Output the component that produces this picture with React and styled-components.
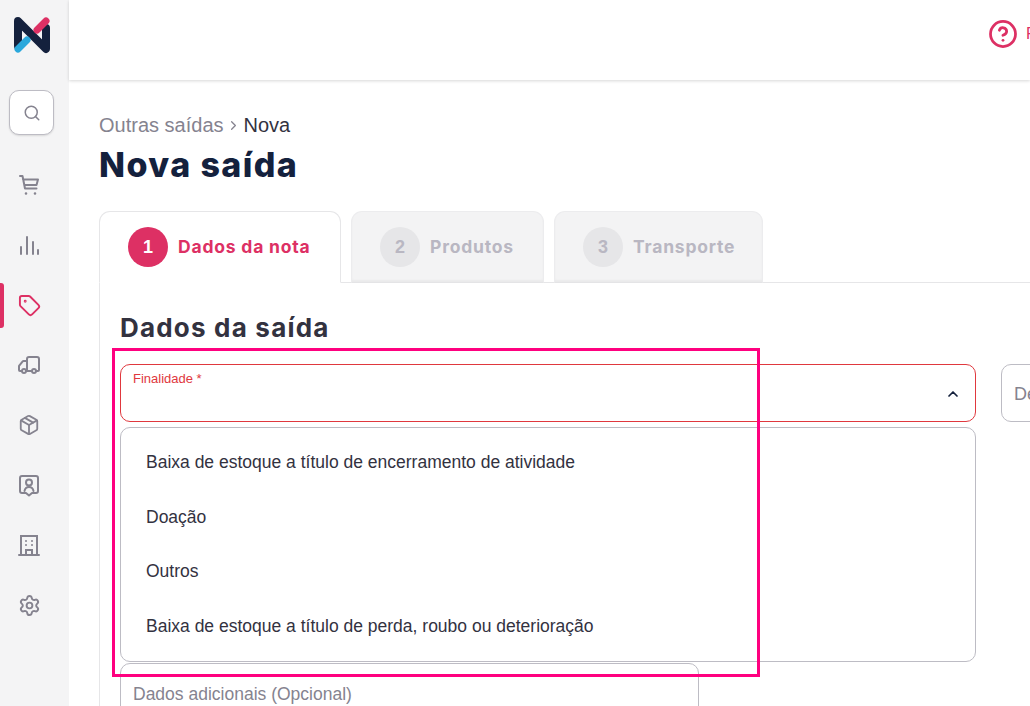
import React from "react";
import styled, { createGlobalStyle } from "styled-components";
import { Search, Tag, Truck, Package, Settings, ChevronUp, CircleHelp, ChevronRight } from "lucide-react";

const GlobalStyle = createGlobalStyle`
  html, body { margin: 0; padding: 0; background: #fff; }
  body { font-family: "Liberation Sans", Arial, sans-serif; }
  * { box-sizing: border-box; }
`;

const Page = styled.div`
  display: flex;
  width: 1030px;
  height: 706px;
  overflow: hidden;
`;

const Sidebar = styled.aside`
  flex: 0 0 69px;
  background: #f4f4f5;
  display: flex;
  flex-direction: column;
  align-items: flex-start;
  padding-top: 16px;
`;

const LogoMark = styled.svg`
  width: 36px;
  height: 38px;
  flex: none;
  margin-left: 14px;
`;

const SearchBox = styled.button`
  width: 45px;
  height: 45px;
  margin: 36px 0 20px 9px;
  padding: 0;
  background: #fff;
  border: 1px solid #bdbcc4;
  border-radius: 10px;
  box-shadow: 0 1px 2px rgba(0, 0, 0, 0.12);
  color: #85838f;
  display: flex;
  align-items: center;
  justify-content: center;
`;

const NavItem = styled.div`
  position: relative;
  width: 58px;
  height: 60px;
  flex: none;
  display: flex;
  align-items: center;
  justify-content: center;
  color: ${(p) => (p.$active ? "#dd3064" : "#85838f")};

  &::before {
    content: ${(p) => (p.$active ? '""' : "none")};
    position: absolute;
    left: 0;
    top: 8px;
    width: 4px;
    height: 45px;
    background: #dd3064;
    border-radius: 0 3px 3px 0;
  }
`;

const Flip = styled.span`
  display: flex;
  transform: scaleX(-1);
`;

const Main = styled.main`
  flex: 1;
  min-width: 0;
`;

const Header = styled.header`
  height: 80px;
  background: #fff;
  box-shadow: 0 1px 3px rgba(0, 0, 0, 0.16);
  display: flex;
  justify-content: flex-end;
  align-items: center;
`;

const HelpLink = styled.div`
  flex: 0 0 42px;
  min-width: 0;
  display: flex;
  align-items: center;
  gap: 8px;
  color: #dd3064;
  font-size: 16px;
  white-space: nowrap;
  margin-top: -12px;

  svg {
    flex: none;
  }
`;

const Content = styled.div`
  padding: 33px 0 0 30px;
`;

const Breadcrumb = styled.div`
  display: flex;
  align-items: center;
  gap: 2px;
  height: 24px;
  font-size: 20px;
  color: #85838f;
`;

const Current = styled.span`
  color: #33323f;
  margin-left: 1px;
`;

const Title = styled.h1`
  margin: 8px 0 26px;
  height: 40px;
  line-height: 40px;
  font-family: Inter, sans-serif;
  font-size: 34px;
  font-weight: 800;
  letter-spacing: 1.4px;
  color: #14213d;
`;

const TabBar = styled.div`
  display: flex;
  gap: 10px;
  position: relative;
  z-index: 1;
  margin-bottom: -1px;
`;

const Tab = styled.div`
  flex: 0 0 ${(p) => p.$width}px;
  height: 72px;
  display: flex;
  align-items: center;
  gap: 10px;
  padding: 0 0 0 28px;
  border: 1px solid ${(p) => (p.$active ? "#e6e6e8" : "#ececee")};
  border-bottom: ${(p) => (p.$active ? "1px solid #fff" : "1px solid #e4e4e6")};
  border-radius: 11px 11px 0 0;
  background: ${(p) => (p.$active ? "#fff" : "#f3f3f4")};
  box-shadow: ${(p) => (p.$active ? "none" : "inset 0 -2px 2px rgba(0,0,0,0.04)")};
`;

const Step = styled.span`
  width: 40px;
  height: 40px;
  border-radius: 50%;
  display: flex;
  align-items: center;
  justify-content: center;
  font-size: 18px;
  font-weight: 700;
  background: ${(p) => (p.$active ? "#dd3064" : "#e6e6e8")};
  color: ${(p) => (p.$active ? "#fff" : "#b9b7c2")};
`;

const TabLabel = styled.span`
  font-family: Inter, sans-serif;
  font-size: 17.5px;
  font-weight: 700;
  letter-spacing: 0.8px;
  white-space: nowrap;
  padding-bottom: 2px;
  color: ${(p) => (p.$active ? "#dd3064" : "#b9b7c2")};
`;

const Panel = styled.section`
  position: relative;
  border-top: 1px solid #e6e6e8;
  border-left: 1px solid #e6e6e8;
  padding: 29px 0 0 20px;
  width: 1000px;
`;

const SectionTitle = styled.h2`
  margin: 0 0 20px;
  height: 32px;
  line-height: 32px;
  font-family: Inter, sans-serif;
  font-size: 26px;
  font-weight: 700;
  letter-spacing: 1.2px;
  color: #33323f;
`;

const Row = styled.div`
  display: flex;
  gap: 25px;
  align-items: flex-start;
`;

const SelectColumn = styled.div`
  flex: 0 0 856px;
`;

const Field = styled.div`
  position: relative;
  height: 58px;
  flex: 1;
  background: #fff;
  border: 1px solid ${(p) => (p.$error ? "#e0383e" : "#bdbcc4")};
  border-radius: 10px;
  padding: 7px 12px 0;
  display: flex;
  justify-content: space-between;
  align-items: flex-start;
`;

const SmallLabel = styled.span`
  font-size: 13px;
  line-height: 14px;
  color: #e0383e;
`;

const Caret = styled.span`
  display: flex;
  color: #14213d;
  margin: 14px 2px 0 0;
`;

const Placeholder = styled.span`
  font-size: 18px;
  line-height: 44px;
  color: #85838f;
  white-space: nowrap;
`;

const Menu = styled.ul`
  list-style: none;
  margin: 5px 0 0;
  padding: 7px 25px 0;
  height: 235px;
  border: 1px solid #bdbcc4;
  border-radius: 10px;
  background: #fff;
`;

const Option = styled.li`
  height: 54.5px;
  line-height: 54.5px;
  font-size: 17.5px;
  color: #33323f;
  white-space: nowrap;
`;

const NotesField = styled.div`
  width: 579px;
  height: 60px;
  margin-top: 1px;
  border: 1px solid #bdbcc4;
  border-radius: 10px;
  padding: 20px 12px 0;
  font-size: 17.5px;
  line-height: 20px;
  color: #85838f;
`;

const Highlight = styled.div`
  position: absolute;
  left: 12px;
  top: 65px;
  width: 648px;
  height: 329px;
  border: 3px solid #ff007f;
  pointer-events: none;
`;

const options = [
  "Baixa de estoque a título de encerramento de atividade",
  "Doação",
  "Outros",
  "Baixa de estoque a título de perda, roubo ou deterioração",
];

const tabs = [
  { step: 1, label: "Dados da nota", width: 242, active: true },
  { step: 2, label: "Produtos", width: 193 },
  { step: 3, label: "Transporte", width: 209 },
];

const CartIcon = () => (
  <svg width="24" height="24" viewBox="0 0 24 24" fill="none" stroke="currentColor" strokeWidth="2" strokeLinecap="round" strokeLinejoin="round">
    <path d="M3 3h2.500L8 15.500h11.500M6 6.500h15l-1.500 5.500H7.200" />
    <path d="M9 20.500h.01M18 20.500h.01" strokeWidth="2.600" />
  </svg>
);

const BarsIcon = () => (
  <svg width="24" height="24" viewBox="0 0 24 24" fill="none" stroke="currentColor" strokeWidth="2" strokeLinecap="round">
    <path d="M4 21v-7M10 21V4M16 21V9M21 21v-4" />
  </svg>
);

const ContactIcon = () => (
  <svg width="24" height="24" viewBox="0 0 24 24" fill="none" stroke="currentColor" strokeWidth="2" strokeLinejoin="round" strokeLinecap="round">
    <path d="M5 3h14a2 2 0 0 1 2 2v13a2 2 0 0 1-2 2h-4l-3 2.500L9 20H5a2 2 0 0 1-2-2V5a2 2 0 0 1 2-2z" />
    <circle cx="12" cy="9.500" r="3" />
    <path d="M7.500 18c.5-2.500 2.300-4 4.500-4s4 1.500 4.500 4" />
  </svg>
);

const OfficeIcon = () => (
  <svg width="24" height="24" viewBox="0 0 24 24" fill="none" stroke="currentColor" strokeWidth="2" strokeLinecap="round">
    <path d="M2 22h20M4 22V3h16v19M9 22v-5h6v5M9 8h.01M15 8h.01M9 12h.01M15 12h.01" />
  </svg>
);

const Logo = () => (
  <LogoMark viewBox="0 0 36 38">
    <path d="M4 30V5L32 33V12" fill="none" stroke="#14213d" strokeWidth="8" strokeLinejoin="round" strokeLinecap="round" />
    <path d="M32 5L23 14" fill="none" stroke="#dd3064" strokeWidth="7" strokeLinecap="round" />
    <path d="M4 33L13 24" fill="none" stroke="#2aa8dc" strokeWidth="7" strokeLinecap="round" />
  </LogoMark>
);

export default function App() {
  return (
    <Page>
      <GlobalStyle />
      <Sidebar>
        <Logo />
        <SearchBox>
          <Search size={18} strokeWidth={2} />
        </SearchBox>
        <NavItem><CartIcon /></NavItem>
        <NavItem><BarsIcon /></NavItem>
        <NavItem $active><Tag size={23} strokeWidth={2} /></NavItem>
        <NavItem><Flip><Truck size={24} strokeWidth={2} /></Flip></NavItem>
        <NavItem><Package size={22} strokeWidth={2} /></NavItem>
        <NavItem><ContactIcon /></NavItem>
        <NavItem><OfficeIcon /></NavItem>
        <NavItem><Settings size={23} strokeWidth={2} /></NavItem>
      </Sidebar>
      <Main>
        <Header>
          <HelpLink>
            <CircleHelp size={30} strokeWidth={2.2} />
            <span>Precisa de ajuda?</span>
          </HelpLink>
        </Header>
        <Content>
          <Breadcrumb>
            Outras saídas
            <ChevronRight size={15} strokeWidth={2} />
            <Current>Nova</Current>
          </Breadcrumb>
          <Title>Nova saída</Title>
          <TabBar>
            {tabs.map((t) => (
              <Tab key={t.step} $active={t.active} $width={t.width}>
                <Step $active={t.active}>{t.step}</Step>
                <TabLabel $active={t.active}>{t.label}</TabLabel>
              </Tab>
            ))}
          </TabBar>
          <Panel>
            <SectionTitle>Dados da saída</SectionTitle>
            <Row>
              <SelectColumn>
                <Field $error>
                  <SmallLabel>Finalidade *</SmallLabel>
                  <Caret><ChevronUp size={16} strokeWidth={2.6} /></Caret>
                </Field>
                <Menu>
                  {options.map((o) => (
                    <Option key={o}>{o}</Option>
                  ))}
                </Menu>
              </SelectColumn>
              <Field>
                <Placeholder>Descrição</Placeholder>
              </Field>
            </Row>
            <NotesField>Dados adicionais (Opcional)</NotesField>
            <Highlight />
          </Panel>
        </Content>
      </Main>
    </Page>
  );
}
